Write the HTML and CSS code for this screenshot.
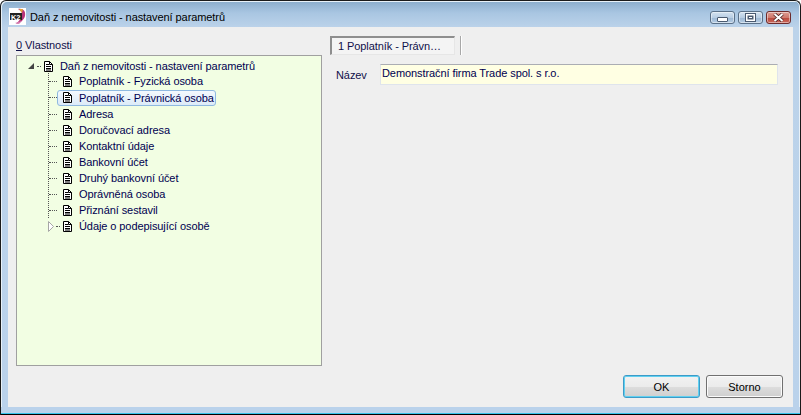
FILE: index.html
```html
<!DOCTYPE html>
<html lang="cs">
<head>
<meta charset="utf-8">
<title>Daň z nemovitosti - nastavení parametrů</title>
<link rel="stylesheet" href="styles.css">
</head>
<body>
<svg class="defs" width="0" height="0" aria-hidden="true">
  <symbol id="doc" viewBox="0 0 9 11">
    <path d="M.5 .5H5.500L8.500 3.500V10.500H.5Z" fill="#fff" stroke="#000"/>
    <path d="M5.500 .5V3.500H8.500" fill="none" stroke="#000"/>
    <path d="M2 3.500H5M2 5.500H7M2 7.500H7M2 9H7" stroke="#000"/>
  </symbol>
</svg>
<div class="window">
  <header class="titlebar">
    <svg class="logo" width="17" height="17" viewBox="0 0 17 17">
      <rect width="17" height="17" fill="#fff"/>
      <path d="M9 1C14 0 17 3 16 8C15 12 11 15 7 16C10 13 13 10 13 6C13 4 11 2 9 1Z" fill="#b8357a"/>
      <path d="M10 1H14L13 5Z" fill="#e8a23c"/>
      <path d="M6 15L10 16L13 13Z" fill="#d67bb0"/>
      <rect x="1" y="5" width="12" height="7" fill="#222"/>
      <text class="logo-text" x="2" y="11.500">K2</text>
    </svg>
    <span class="title">Daň z nemovitosti - nastavení parametrů</span>
    <div class="controls">
      <button class="ctl ctl-min"><i class="glyph-min"></i></button>
      <button class="ctl ctl-max"><i class="glyph-max"></i></button>
      <button class="ctl ctl-close">
        <svg width="13" height="9" viewBox="0 0 13 9"><path d="M2.500 1L10.500 8M10.500 1L2.500 8" stroke="#4a2424" stroke-width="3.600"/><path d="M2.500 1L10.500 8M10.500 1L2.500 8" stroke="#fff" stroke-width="2"/></svg>
      </button>
    </div>
  </header>
  <main class="client">
    <div class="panes">
      <section class="left">
        <div class="left-label"><u>0</u> Vlastnosti</div>
        <div class="tree">
          <div class="node root">
            <svg class="arrow" width="6" height="6" viewBox="0 0 6 6"><path d="M6 0V6H0Z" fill="#444"/></svg>
            <span class="dash short"></span>
            <span class="item bare"><svg class="doc" width="9" height="11"><use href="#doc"/></svg>Daň z nemovitosti - nastavení parametrů</span>
          </div>
          <div class="children">
            <div class="node child"><span class="dash"></span><span class="item"><svg class="doc" width="9" height="11"><use href="#doc"/></svg>Poplatník - Fyzická osoba</span></div>
            <div class="node child current"><span class="dash"></span><span class="item selected"><svg class="doc" width="9" height="11"><use href="#doc"/></svg>Poplatník - Právnická osoba</span></div>
            <div class="node child"><span class="dash"></span><span class="item"><svg class="doc" width="9" height="11"><use href="#doc"/></svg>Adresa</span></div>
            <div class="node child"><span class="dash"></span><span class="item"><svg class="doc" width="9" height="11"><use href="#doc"/></svg>Doručovací adresa</span></div>
            <div class="node child"><span class="dash"></span><span class="item"><svg class="doc" width="9" height="11"><use href="#doc"/></svg>Kontaktní údaje</span></div>
            <div class="node child"><span class="dash"></span><span class="item"><svg class="doc" width="9" height="11"><use href="#doc"/></svg>Bankovní účet</span></div>
            <div class="node child"><span class="dash"></span><span class="item"><svg class="doc" width="9" height="11"><use href="#doc"/></svg>Druhý bankovní účet</span></div>
            <div class="node child"><span class="dash"></span><span class="item"><svg class="doc" width="9" height="11"><use href="#doc"/></svg>Oprávněná osoba</span></div>
            <div class="node child"><span class="dash"></span><span class="item"><svg class="doc" width="9" height="11"><use href="#doc"/></svg>Přiznání sestavil</span></div>
            <div class="node child last">
              <svg class="expander" width="8" height="11" viewBox="0 0 8 11"><path d="M1.500 .5L6.500 5.500L1.500 10.500Z" fill="#fff" stroke="#a6a6a6"/></svg>
              <span class="dash tiny"></span>
              <span class="item bare"><svg class="doc" width="9" height="11"><use href="#doc"/></svg>Údaje o podepisující osobě</span>
            </div>
          </div>
        </div>
      </section>
      <section class="right">
        <div class="tabs">
          <div class="tab">1 Poplatník - Právn…</div>
          <div class="tab-sep"></div>
        </div>
        <div class="field">
          <label class="field-label">Název</label>
          <div class="field-value">Demonstrační firma Trade spol. s r.o.</div>
        </div>
      </section>
    </div>
    <footer class="actions">
      <button class="btn default">OK</button>
      <button class="btn">Storno</button>
    </footer>
  </main>
  <div class="bottom-edge"></div>
</div>
</body>
</html>
```
FILE: styles.css
```css
* { box-sizing: border-box; }
html, body { margin: 0; padding: 0; }
body { width: 801px; height: 415px; overflow: hidden; background: #fff; font-family: "Liberation Sans", Arial, sans-serif; font-size: 11px; letter-spacing: -.08px; color: #10104a; }
.defs { display: block; height: 0; }
.window {
  width: 801px; height: 415px; display: flex; flex-direction: column;
  border: 1px solid #1a1a1a; border-bottom: 0; border-radius: 6px 6px 0 0;
  background: linear-gradient(180deg, #8aaccb 0, #a9c6e2 12px, #bcd3ea 27px, #bad2eb 100%);
  box-shadow: inset 1px 1px 0 #e8f1f8, inset -1px 0 0 #e8f1f8;
  padding: 0 7px;
}
.titlebar { height: 26px; flex: none; display: flex; align-items: center; margin-left: 1px; }
.logo { flex: none; margin-top: 4px; }
.logo-text { font: bold 7.500px "Liberation Sans", sans-serif; fill: #fff; }
.title { margin-left: 4px; margin-top: 6px; color: #000; white-space: nowrap; }
.controls { margin-left: auto; margin-right: 2px; margin-top: 7px; display: flex; gap: 3px; }
.ctl {
  width: 25px; height: 13px; padding: 0; border: 1px solid #5a7088; border-radius: 3px;
  background: linear-gradient(180deg, #d3e2f0 0, #b9cee3 50%, #9cb7d3 51%, #b5cce3 100%);
  box-shadow: inset 0 0 0 1px rgba(255,255,255,.45);
  display: flex; align-items: center; justify-content: center;
}
.ctl-close { border-color: #6d2b2b; background: linear-gradient(180deg, #dc9b91 0, #cf7a6e 50%, #b9483c 51%, #c9665a 100%); }
.glyph-min { display: block; width: 11px; height: 5px; margin-top: 4px; background: #fff; border: 1px solid #4a5a70; border-radius: 1px; }
.glyph-max { display: block; width: 11px; height: 9px; background: #fff; border: 1px solid #4a5a70; box-shadow: inset 0 0 0 1.500px #fff, inset 0 0 0 3px #4a5a70; }
.client { flex: 1; min-height: 0; background: #efefef; display: flex; flex-direction: column; }
.panes { flex: 1; min-height: 0; display: flex; padding: 9px 0 0 8px; }
.left { width: 306px; flex: none; display: flex; flex-direction: column; }
.left-label { height: 19px; line-height: 18px; }
.tree { height: 311px; background: #f2fee3; border: 1px solid #a0a0a0; padding: 2px 0 0 10px; color: #000050; }
.node { height: 16px; display: flex; align-items: center; white-space: nowrap; }
.arrow { margin-left: 1px; flex: none; }
.dash { width: 8px; flex: none; border-top: 1px dotted #555; }
.dash.short { width: 4px; margin-left: 3px; margin-right: 3px; }
.dash.tiny { width: 4px; margin-left: 1px; margin-right: 3px; }
.doc { flex: none; margin-right: 7px; }
.item { display: flex; align-items: center; height: 16px; padding: 0 1px 0 5px; border: 1px solid transparent; }
.item.bare { padding: 0; border: 0; }
.children { margin-left: 21px; margin-top: -1px; border-left: 1px dotted #555; }
.child.current { height: 17px; }
.child.last { margin-left: -1px; background: #f2fee3; }
.expander { margin-left: -1px; flex: none; }
.selected { background: linear-gradient(180deg, #f4f9fd, #dcebf8); border-color: #8fb9e0; border-radius: 3px; }
.right { flex: 1; min-width: 0; padding-left: 8px; }
.tabs { display: flex; height: 19px; align-items: flex-start; }
.tab {
  width: 125px; height: 19px; line-height: 16px; padding-left: 6px; white-space: nowrap;
  background: #f4f4f4; border: 1px solid #e6e6e6; border-top: 2px solid #8e8e8e; border-left: 2px solid #8e8e8e;
}
.tab-sep { width: 1px; height: 19px; margin-left: 5px; background: #a8a8a8; box-shadow: 1px 0 0 #fff; }
.field { display: flex; align-items: center; margin-top: 9px; height: 21px; }
.field-label { width: 50px; padding-left: 6px; flex: none; }
.field-value {
  width: 398px; height: 21px; line-height: 17px; padding-left: 1px; white-space: nowrap;
  background: #ffffe3; border: 1px solid #dfe4ec; border-top-color: #abadb3; color: #000050;
}
.actions { flex: none; height: 32px; display: flex; justify-content: flex-end; gap: 6px; padding-right: 10px; }
.btn {
  width: 77px; height: 23px; font: inherit; color: #000; border: 1px solid #707070; border-radius: 3px; padding: 0;
  background: linear-gradient(180deg, #f2f2f2 0, #ebebeb 50%, #dddddd 51%, #cfcfcf 100%);
  box-shadow: inset 0 0 0 1px #fbfbfb;
}
.btn.default { border-color: #3c9bc8; box-shadow: inset 0 0 0 1px #60d0f0; }
.bottom-edge { height: 8px; flex: none; margin: 0 -7px; background: #bad2eb; border-bottom: 1px solid #000; box-shadow: inset 0 -1px 0 #36c3ea; }
```
